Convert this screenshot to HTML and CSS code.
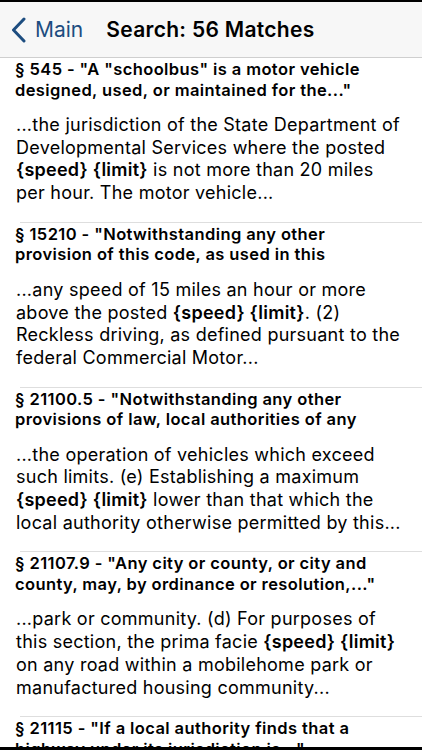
FILE: index.html
```html
<!DOCTYPE html>
<html>
<head>
<meta charset="utf-8">
<link rel="stylesheet" href="styles.css">
</head>
<body>
<div class="screen">
  <header class="nav">
    <a class="back">
      <svg class="chev" width="18" height="26" viewBox="0 0 18 26"><path d="M14 2 L3.5 13 L14 24" fill="none" stroke="currentColor" stroke-width="3" stroke-linecap="round" stroke-linejoin="round"/></svg>
      <span>Main</span>
    </a>
    <h1 class="title">Search: 56 Matches</h1>
  </header>
  <main class="list">
    <section class="entry first">
      <h2 class="head">§ 545 - "A "schoolbus" is a motor vehicle<br>designed, used, or maintained for the..."</h2>
      <p class="body">...the jurisdiction of the State Department of<br>Developmental Services where the posted<br><b>{speed} {limit}</b> is not more than 20 miles<br>per hour. The motor vehicle...</p>
    </section>
    <section class="entry">
      <h2 class="head">§ 15210 - "Notwithstanding any other<br>provision of this code, as used in this</h2>
      <p class="body">...any speed of 15 miles an hour or more<br>above the posted <b>{speed} {limit}</b>. (2)<br>Reckless driving, as defined pursuant to the<br>federal Commercial Motor...</p>
    </section>
    <section class="entry">
      <h2 class="head">§ 21100.5 - "Notwithstanding any other<br>provisions of law, local authorities of any</h2>
      <p class="body">...the operation of vehicles which exceed<br>such limits. (e) Establishing a maximum<br><b>{speed} {limit}</b> lower than that which the<br>local authority otherwise permitted by this...</p>
    </section>
    <section class="entry">
      <h2 class="head">§ 21107.9 - "Any city or county, or city and<br>county, may, by ordinance or resolution,..."</h2>
      <p class="body">...park or community. (d) For purposes of<br>this section, the prima facie <b>{speed} {limit}</b><br>on any road within a mobilehome park or<br>manufactured housing community...</p>
    </section>
    <section class="entry">
      <h2 class="head">§ 21115 - "If a local authority finds that a<br>highway under its jurisdiction is..."</h2>
    </section>
  </main>
  <div class="bottom-strip"></div>
</div>
</body>
</html>
```
FILE: styles.css
```css
html, body {
  margin: 0;
  padding: 0;
  background: #fff;
}
body {
  font-family: Inter, "Liberation Sans", Arial, sans-serif;
  color: #000;
}
.screen {
  width: 422px;
  height: 750px;
  overflow: hidden;
  position: relative;
  border-top: 2px solid #000;
  box-sizing: border-box;
}
.nav {
  height: 56px;
  background: #f7f7f7;
  border-bottom: 1px solid #cfcfcf;
  box-sizing: border-box;
  display: flex;
  align-items: center;
  padding-left: 10px;
}
.back {
  display: flex;
  align-items: center;
  color: #1d4d80;
  font-size: 21px;
  gap: 7px;
  margin-right: 23px;
}
.chev {
  display: block;
}
.title {
  margin: 0;
  font-size: 21px;
  font-weight: 600;
  letter-spacing: 0.3px;
}
.list {
  display: flex;
  flex-direction: column;
}
.entry {
  padding: 0 0 17px 15px;
}
.entry::before {
  content: "";
  display: block;
  height: 1px;
  background: #dedede;
  margin-left: 5px;
  margin-bottom: 1px;
}
.entry.first::before {
  display: none;
}
.entry.first {
  padding-top: 1px;
}
.head {
  margin: 0;
  font-size: 16.5px;
  line-height: 20.5px;
  font-weight: 600;
  letter-spacing: 0.4px;
  white-space: nowrap;
}
.body {
  margin: 14px 0 0 1px;
  font-size: 18px;
  line-height: 22.7px;
  letter-spacing: 0.25px;
  white-space: nowrap;
}
.body b {
  font-weight: 600;
}
.bottom-strip {
  position: absolute;
  left: 0;
  right: 0;
  bottom: 0;
  height: 3px;
  background: #000;
}
```
